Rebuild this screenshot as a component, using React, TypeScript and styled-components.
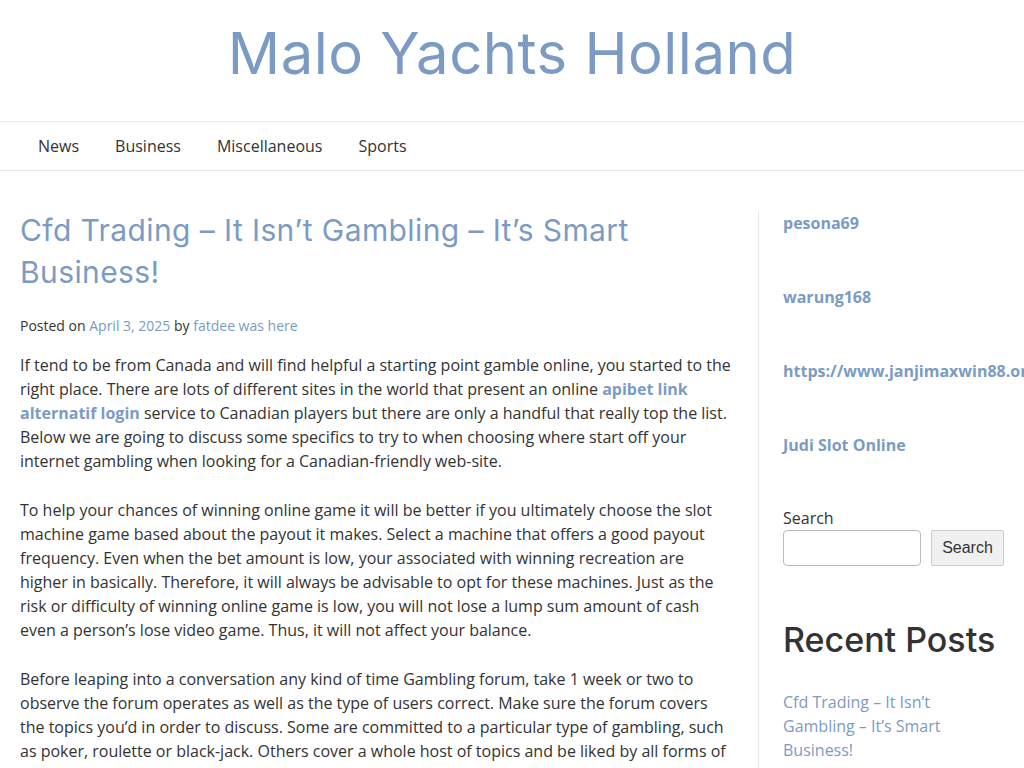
import styled, { createGlobalStyle } from 'styled-components';

const GlobalStyle = createGlobalStyle`
  html, body {
    margin: 0;
    padding: 0;
    background: #fff;
    overflow-x: hidden;
  }
  body {
    font-family: 'Open Sans', 'Liberation Sans', sans-serif;
    font-size: 16px;
    color: #333;
  }
  a {
    color: #7b9bc4;
    text-decoration: none;
  }
`;

const headingFont = `'Inter', 'Noto Sans', sans-serif`;

const SiteHeader = styled.header`
  height: 121px;
  display: flex;
  align-items: center;
  justify-content: center;
`;

const SiteTitle = styled.h1`
  margin: 0;
  font-family: ${headingFont};
  font-weight: 400;
  font-size: 58px;
  color: #7b9bc4;
  letter-spacing: 0.5px;
  transform: translateY(-8px);
`;

const Nav = styled.nav`
  border-top: 1px solid #e8e8e8;
  border-bottom: 1px solid #e8e8e8;
  height: 48px;
  display: flex;
  align-items: center;
  padding-left: 38px;
  gap: 36px;
`;

const NavLink = styled.a`
  color: #333;
  font-size: 16px;
`;

const Layout = styled.div`
  display: grid;
  grid-template-columns: 758px 1fr;
  padding-top: 38px;
`;

const Main = styled.main`
  padding: 0 26px 0 20px;
`;

const PostTitle = styled.h2`
  margin: 0;
  max-width: 620px;
  font-family: ${headingFont};
  font-weight: 400;
  font-size: 30px;
  line-height: 42px;
  letter-spacing: 0.4px;
  color: #7b9bc4;
`;

const Meta = styled.div`
  margin-top: 23px;
  font-size: 14px;
  line-height: 20px;
`;

const Paragraph = styled.p`
  margin: 17px 0 25px;
  line-height: 24px;
  & + & {
    margin-top: 0;
  }
`;

const StrongLink = styled.a`
  font-weight: 700;
`;

const Sidebar = styled.aside`
  border-left: 1px solid #e8e8e8;
  padding-left: 24px;
  margin-top: 2px;
  white-space: nowrap;
  overflow: hidden;
`;

const WidgetLink = styled.a`
  display: block;
  font-weight: 700;
  font-size: 16px;
  line-height: 24px;
  margin-bottom: 50px;
`;

const SearchLabel = styled.label`
  display: block;
  font-size: 16px;
  line-height: 22px;
`;

const SearchRow = styled.div`
  display: flex;
  gap: 10px;
  margin-top: 1px;
`;

const SearchInput = styled.input`
  width: 138px;
  height: 36px;
  box-sizing: border-box;
  border: 1px solid #bbb;
  border-radius: 4px;
  padding: 4px 8px;
`;

const SearchButton = styled.button`
  width: 73px;
  height: 36px;
  background: #f0f0f0;
  border: 1px solid #ccc;
  border-radius: 2px;
  font-family: 'Liberation Sans', Arial, sans-serif;
  font-size: 16px;
  color: #333;
`;

const WidgetTitle = styled.h2`
  margin: 52px 0 0;
  font-family: ${headingFont};
  font-weight: 500;
  font-size: 34px;
  line-height: 44px;
  color: #333;
`;

const RecentList = styled.div`
  margin-top: 28px;
  white-space: normal;
  width: 180px;
  line-height: 24px;
`;

const App = () => {
  return (
    <>
      <GlobalStyle />
      <SiteHeader>
        <SiteTitle>Malo Yachts Holland</SiteTitle>
      </SiteHeader>
      <Nav>
        <NavLink href="#">News</NavLink>
        <NavLink href="#">Business</NavLink>
        <NavLink href="#">Miscellaneous</NavLink>
        <NavLink href="#">Sports</NavLink>
      </Nav>
      <Layout>
        <Main>
          <PostTitle>Cfd Trading – It Isn’t Gambling – It’s Smart Business!</PostTitle>
          <Meta>
            Posted on <a href="#">April 3, 2025</a> by <a href="#">fatdee was here</a>
          </Meta>
          <Paragraph>
            If tend to be from Canada and will find helpful a starting point gamble online, you started to the right place. There are lots of different sites in the world that present an online <StrongLink href="#">apibet link alternatif login</StrongLink> service to Canadian players but there are only a handful that really top the list. Below we are going to discuss some specifics to try to when choosing where start off your internet gambling when looking for a Canadian-friendly web-site.
          </Paragraph>
          <Paragraph>
            To help your chances of winning online game it will be better if you ultimately choose the slot machine game based about the payout it makes. Select a machine that offers a good payout frequency. Even when the bet amount is low, your associated with winning recreation are higher in basically. Therefore, it will always be advisable to opt for these machines. Just as the risk or difficulty of winning online game is low, you will not lose a lump sum amount of cash even a person’s lose video game. Thus, it will not affect your balance.
          </Paragraph>
          <Paragraph>
            Before leaping into a conversation any kind of time Gambling forum, take 1 week or two to observe the forum operates as well as the type of users correct. Make sure the forum covers the topics you’d in order to discuss. Some are committed to a particular type of gambling, such as poker, roulette or black-jack. Others cover a whole host of topics and be liked by all forms of gamers, with fresh and original threads for everybody on the table so you might decide to commence.
          </Paragraph>
        </Main>
        <Sidebar>
          <WidgetLink href="#">pesona69</WidgetLink>
          <WidgetLink href="#">warung168</WidgetLink>
          <WidgetLink href="#">https://www.janjimaxwin88.org/</WidgetLink>
          <WidgetLink href="#">Judi Slot Online</WidgetLink>
          <SearchLabel htmlFor="s">Search</SearchLabel>
          <SearchRow>
            <SearchInput id="s" type="text" />
            <SearchButton type="button">Search</SearchButton>
          </SearchRow>
          <WidgetTitle>Recent Posts</WidgetTitle>
          <RecentList>
            <a href="#">Cfd Trading – It Isn’t Gambling – It’s Smart Business!</a>
          </RecentList>
        </Sidebar>
      </Layout>
    </>
  );
};

export default App;
